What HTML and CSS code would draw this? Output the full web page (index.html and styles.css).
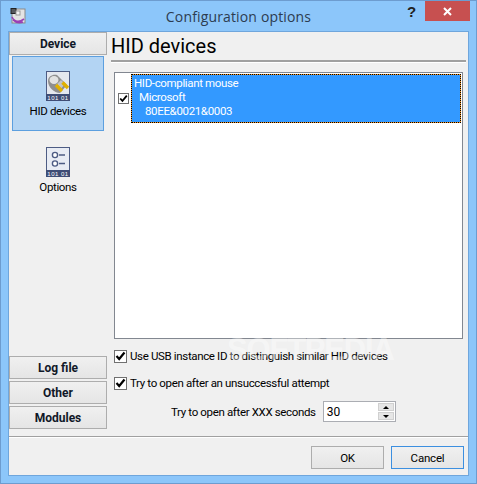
FILE: index.html
```html
<!DOCTYPE html>
<html lang="en">
<head>
  <meta charset="UTF-8" />
  <title>Configuration options</title>
  <link rel="stylesheet" href="styles.css">
</head>
<body>
  <div class="window">
    <div class="titlebar">
      <svg class="app-icon" width="16" height="16" viewBox="0 0 16 16">
        <rect x="2" y="1" width="13" height="14" fill="#e4e4e4" stroke="#8a8a8a"/>
        <rect x="1" y="0.5" width="5" height="5" fill="#55585c" stroke="#222"/>
        <rect x="6" y="3" width="4" height="4" fill="#f4f4f4" stroke="#999"/>
        <path d="M2 9 C5 15 10 14 14 11 M3 12 C6 15 10 15 13 14" fill="none" stroke="#9a3fb5" stroke-width="1.6"/>
      </svg>
      <span class="title">Configuration options</span>
      <span class="help">?</span>
      <span class="close">
        <svg width="9" height="9" viewBox="0 0 9 9"><path d="M1 1 L8 8 M8 1 L1 8" stroke="#fff" stroke-width="2"/></svg>
      </span>
    </div>

    <div class="client">
      <div class="main">
        <!-- Left navigation -->
        <div class="sidebar">
          <div class="nav-top">
            <div class="nav-btn">Device</div>
            <div class="nav-item selected">
              <svg class="big-icon" width="24" height="30" viewBox="0 0 24 30">
                <rect x="0.5" y="0.5" width="23" height="29" fill="#e4e7ee" stroke="#4d5c84"/>
                <rect x="0" y="23" width="24" height="7" fill="#3f4d75"/>
                <path d="M2 10 C2 5 7 3 11 4 L21 14 L14 22 C8 22 2 16 2 10 Z" fill="#8f8f8f"/>
                <ellipse cx="8" cy="9" rx="4.5" ry="4" fill="#e2e2e2"/>
                <path d="M10 14 L15 9 L19 13 L14 19 Z" fill="#c4c4c4"/>
                <path d="M10 14 L16 20 M16.5 11.5 L22 17" stroke="#e0b000" stroke-width="3.4"/>
                <text class="bits" x="12" y="29">101 01</text>
              </svg>
              <span>HID devices</span>
            </div>
            <div class="nav-item">
              <svg class="big-icon" width="24" height="30" viewBox="0 0 24 30">
                <rect x="0.5" y="0.5" width="23" height="29" fill="#e8ecf4" stroke="#4d5c84"/>
                <rect x="0" y="23" width="24" height="7" fill="#3f4d75"/>
                <circle cx="9" cy="8" r="2.6" fill="#fff" stroke="#4d5c84" stroke-width="1.4"/>
                <circle cx="9" cy="16.5" r="2.6" fill="#fff" stroke="#4d5c84" stroke-width="1.4"/>
                <path d="M13 8 H19 M13 16.5 H19" stroke="#4d5c84" stroke-width="1.4"/>
                <text class="bits" x="12" y="29">101 01</text>
              </svg>
              <span>Options</span>
            </div>
          </div>
          <div class="nav-bottom">
            <div class="nav-btn">Log file</div>
            <div class="nav-btn">Other</div>
            <div class="nav-btn">Modules</div>
          </div>
        </div>

        <!-- Page -->
        <div class="page">
          <h1>HID devices</h1>
          <div class="device-list">
            <div class="device-row">
              <span class="check small">
                <svg width="11" height="10" viewBox="0 0 11 10"><path d="M1.5 5 L4.2 8 L9.5 1.5" fill="none" stroke="#000" stroke-width="2.2"/></svg>
              </span>
              <div class="device-info">
                <div>HID-compliant mouse</div>
                <div class="indent1">Microsoft</div>
                <div class="indent2">80EE&amp;0021&amp;0003</div>
              </div>
            </div>
          </div>
          <label class="option first">
            <span class="check">
              <svg width="11" height="10" viewBox="0 0 11 10"><path d="M1.5 5 L4.2 8 L9.5 1.5" fill="none" stroke="#000" stroke-width="2.2"/></svg>
            </span>
            Use USB instance ID to distinguish similar HID devices
          </label>
          <label class="option">
            <span class="check">
              <svg width="11" height="10" viewBox="0 0 11 10"><path d="M1.5 5 L4.2 8 L9.5 1.5" fill="none" stroke="#000" stroke-width="2.2"/></svg>
            </span>
            Try to open after an unsuccessful attempt
          </label>
          <div class="retry">
            <span>Try to open after XXX seconds</span>
            <div class="spin-box">
              <span class="spin-value">30</span>
              <span class="spin-arrows">
                <span class="arrow-btn"><i class="arrow up"></i></span>
                <span class="arrow-btn"><i class="arrow down"></i></span>
              </span>
            </div>
          </div>
        </div>
      </div>

      <div class="footer">
        <button class="btn">OK</button>
        <button class="btn default">Cancel</button>
      </div>
    </div>

    <span class="watermark">SOFTPEDIA</span>
  </div>
</body>
</html>
```

FILE: styles.css
```css
* {
  box-sizing: border-box;
}

html, body {
  margin: 0;
  height: 100%;
}

body {
  font-family: Roboto, "Liberation Sans", sans-serif;
  font-size: 11.5px;
  letter-spacing: -0.35px;
  color: #000;
}

.window {
  position: relative;
  width: 477px;
  height: 484px;
  background: #8cc6fa;
  border: 1px solid #6d9ccf;
  padding: 0 7px 7px;
  display: flex;
  flex-direction: column;
  overflow: hidden;
}

.titlebar {
  position: relative;
  height: 30px;
  flex: none;
  display: flex;
  align-items: center;
  justify-content: center;
}

.app-icon {
  position: absolute;
  left: 2px;
  top: 7px;
}

.title {
  font-family: "Open Sans", sans-serif;
  font-size: 14px;
  letter-spacing: 0.15px;
  color: #2c3c50;
}

.help {
  position: absolute;
  left: 399px;
  top: 2px;
  font-family: "Liberation Sans", sans-serif;
  font-size: 15px;
  font-weight: bold;
  letter-spacing: 0;
  color: #222;
}

.close {
  position: absolute;
  left: 417px;
  top: 0;
  width: 45px;
  height: 20px;
  background: #c75050;
  display: flex;
  align-items: center;
  justify-content: center;
}

.client {
  flex: 1;
  background: #f0f0f0;
  border: 1px solid #6fa6dc;
  display: flex;
  flex-direction: column;
  min-height: 0;
}

.main {
  flex: 1;
  display: flex;
  min-height: 0;
}

.sidebar {
  width: 98px;
  padding-bottom: 7px;
  display: flex;
  flex-direction: column;
  justify-content: space-between;
  flex: none;
}

.nav-btn {
  height: 23px;
  border: 1px solid #adadad;
  background: linear-gradient(#f0f0f0, #e5e5e5);
  font-size: 12px;
  font-weight: bold;
  letter-spacing: 0;
  text-align: center;
  line-height: 22px;
  color: #101828;
}

.nav-bottom {
  display: flex;
  flex-direction: column;
  gap: 2px;
}

.nav-item {
  margin: 1px 3px 0;
  height: 75px;
  display: flex;
  flex-direction: column;
  align-items: center;
  justify-content: flex-start;
  padding-top: 15px;
  gap: 3px;
}

.nav-item.selected {
  background: #b3d4f3;
  border: 1px solid #5c9fdf;
  padding-top: 14px;
}

.big-icon {
  display: block;
  flex: none;
}

.bits {
  font-family: "Liberation Sans", sans-serif;
  font-size: 6px;
  letter-spacing: 0.5px;
  fill: #fff;
  text-anchor: middle;
}

.page {
  flex: 1;
  padding: 0 2px 0 4px;
  min-width: 0;
}

h1 {
  margin: 0;
  height: 30px;
  font-size: 20px;
  font-weight: normal;
  letter-spacing: 0;
  line-height: 28px;
  border-bottom: 2px solid #a0a0a0;
  box-shadow: 0 1px 0 #fff;
}

.device-list {
  margin: 10px 3px 0 3px;
  height: 267px;
  background: #fff;
  border: 1px solid #828790;
  padding: 1px 1px 0 3px;
  display: flex;
  flex-direction: column;
}

.device-row {
  display: flex;
  align-items: center;
  gap: 2px;
}

.device-info {
  flex: 1;
  height: 49px;
  border: 1px dotted #000;
  background: linear-gradient(#3399ff, #3399ff) padding-box, #f7941d border-box;
  color: #fff;
  padding: 1px 2px;
  line-height: 14px;
}

.indent1 {
  padding-left: 5px;
}

.indent2 {
  padding-left: 11px;
}

.check {
  width: 13px;
  height: 13px;
  flex: none;
  background: #fff;
  border: 1px solid #707070;
  display: flex;
  align-items: center;
  justify-content: center;
}

.check.small {
  width: 11px;
  height: 11px;
}

.check.small svg {
  width: 9px;
  height: 9px;
}

.option {
  margin-left: 3px;
  margin-top: 13px;
  height: 14px;
  display: flex;
  align-items: center;
  gap: 3px;
  white-space: nowrap;
}

.option.first {
  margin-top: 10px;
}

.retry {
  margin-top: 11px;
  margin-left: 60px;
  display: flex;
  align-items: center;
  gap: 7px;
}

.spin-box {
  width: 73px;
  height: 21px;
  background: #fff;
  border: 1px solid #abadb3;
  display: flex;
  justify-content: space-between;
  align-items: center;
  padding: 0 1px 0 3px;
  font-size: 12px;
  letter-spacing: 0;
}

.spin-arrows {
  width: 16px;
  height: 17px;
  display: flex;
  flex-direction: column;
  gap: 1px;
}

.arrow-btn {
  flex: 1;
  background: #e6e6e6;
  border: 1px solid #d0d0d0;
  display: flex;
  align-items: center;
  justify-content: center;
}

.arrow {
  width: 0;
  height: 0;
  border-left: 3px solid transparent;
  border-right: 3px solid transparent;
}

.arrow.up {
  border-bottom: 3px solid #000;
}

.arrow.down {
  border-top: 3px solid #000;
}

.footer {
  height: 39px;
  flex: none;
  border-top: 1px solid #a0a0a0;
  box-shadow: inset 0 1px 0 #fff;
  display: flex;
  justify-content: flex-end;
  align-items: flex-start;
  gap: 7px;
  padding: 9px 4px 0 0;
}

.btn {
  width: 73px;
  height: 23px;
  font-family: inherit;
  font-size: 11.5px;
  letter-spacing: -0.2px;
  background: linear-gradient(#f0f0f0, #e5e5e5);
  border: 1px solid #adadad;
  padding: 0;
}

.btn.default {
  border-color: #3c8fe0;
}

/* faint stamp over the lower part of the dialog */
.watermark {
  position: absolute;
  left: 226px;
  top: 331px;
  font-family: "Liberation Sans", sans-serif;
  font-size: 31px;
  font-weight: bold;
  letter-spacing: -1.2px;
  color: rgba(255, 255, 255, 0.4);
  pointer-events: none;
}
```
